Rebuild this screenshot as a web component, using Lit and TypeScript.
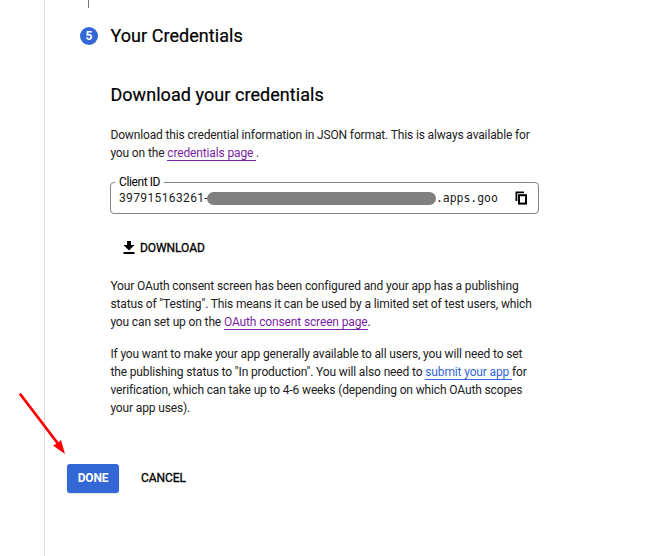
import { LitElement, html, css } from "lit";
import { customElement } from "lit/decorators.js";

@customElement("app-root")
export class AppRoot extends LitElement {
  static styles = css`
    :host { display: block; position: relative; height: 556px; overflow: hidden; background: #fff; color: #000;
      font-family: Roboto, "Liberation Sans", sans-serif; font-size: 12px; line-height: 18px; }
    * { box-sizing: border-box; }
    .page { margin-left: 44px; height: 556px; border-left: 1px solid #dadce0; display: flex; flex-direction: column; align-items: flex-start; white-space: nowrap; }
    .rail { width: 1px; height: 8px; margin-left: 43px; background: #757575; }
    .step { display: flex; align-items: center; height: 24px; margin: 16px 0 0 35px; gap: 12px; }
    .num { width: 18px; height: 18px; border-radius: 50%; background: #3367d6; color: #fff; font-weight: 700; text-align: center; }
    h2, h3 { margin: 0; font-size: 18px; font-weight: 400; line-height: 24px; letter-spacing: .06px; padding-left: .4px; -webkit-text-stroke: 0.2px #000; }
    .body { margin-left: 65px; width: 429px; display: flex; flex-direction: column; align-items: flex-start; }
    h3 { margin-top: 35px; }
    p { margin: 0; color: #212121; letter-spacing: -.137px; padding-left: .4px; }
    .intro { margin-top: 19px; letter-spacing: -.138px; }
    a { color: #7b1fa2; border-bottom: 1px solid #7b1fa2; white-space: pre; }
    a.new { color: #3367d6; border-color: #3367d6; }
    .field { position: relative; margin-top: 20px; width: 429px; height: 32px; border: 1px solid #80868b; border-radius: 4px; display: flex; align-items: center; padding-left: 8px; }
    .label { position: absolute; left: 4px; top: -10px; padding: 0 4px; background: #fff; line-height: 18px; letter-spacing: -.4px; }
    .id { width: 88px; letter-spacing: .37px; color: #212121; }
    .mask { width: 229px; height: 13px; border-radius: 7px; background: #808080; }
    .tail { font-family: "DejaVu Sans Mono", monospace; font-size: 11.5px; color: #212121; letter-spacing: -.06px; margin-left: 0; }
    .copy { margin-left: 17px; }
    svg { display: block; }
    .download { display: flex; align-items: center; height: 18px; margin: 25px 0 0 10px; gap: 3px; letter-spacing: -.07px; }
    .download span, .cancel { -webkit-text-stroke: .3px #000; }
    .status { margin-top: 20px; }
    .publish { margin-top: 14px; }
    .actions { display: flex; align-items: center; margin: 47px 0 0 22px; gap: 22px; letter-spacing: -.07px; }
    .cancel { margin-top: -1px; }
    .done { width: 52px; height: 29px; line-height: 29px; border-radius: 3px; background: #3367d6; color: #fff; text-align: center; font-weight: 700; letter-spacing: -.2px; box-shadow: 0 1px 2px #0002; }
    .arrow { position: absolute; left: 0; top: 380px; }
  `;

  render() {
    return html`
      <main class="page">
        <div class="rail"></div>
        <div class="step"><span class="num">5</span><h2>Your Credentials</h2></div>
        <section class="body">
          <h3>Download your credentials</h3>
          <p class="intro">Download this credential information in JSON format. This is always available for<br>you on the <a>credentials page </a>.</p>
          <div class="field">
            <span class="label">Client ID</span>
            <span class="id">397915163261-</span><span class="mask"></span><span class="tail">.apps.goo</span>
            <svg class="copy" width="14" height="14" viewBox="0 0 14 14" fill="none" stroke="#000">
              <path d="M1.4 10V1.4H9" stroke-width="1.8"/><rect x="4" y="4.2" width="7" height="8.4" stroke-width="2"/>
            </svg>
          </div>
          <div class="download">
            <svg width="17" height="14" viewBox="0 0 17 14"><path d="M7 0h4v4h3.5L9 9.6 3.5 4H7zM3.5 11h11v2h-11z"/></svg>
            <span>DOWNLOAD</span>
          </div>
          <p class="status">Your OAuth consent screen has been configured and your app has a publishing<br>status of "Testing". This means it can be used by a limited set of test users, which<br>you can set up on the <a>OAuth consent screen page</a>.</p>
          <p class="publish">If you want to make your app generally available to all users, you will need to set<br>the publishing status to "In production". You will also need to <a class="new">submit your app </a>for<br>verification, which can take up to 4-6 weeks (depending on which OAuth scopes<br>your app uses).</p>
        </section>
        <div class="actions"><span class="done">DONE</span><span class="cancel">CANCEL</span></div>
      </main>
      <svg class="arrow" width="70" height="80" viewBox="0 0 70 80" fill="#f00">
        <path d="M20.5 14.5L59 65" stroke="#f00" stroke-width="2.8" stroke-linecap="round"/><path d="M65 74L53 65.5 57 63.5 61 60z"/>
      </svg>
    `;
  }
}
